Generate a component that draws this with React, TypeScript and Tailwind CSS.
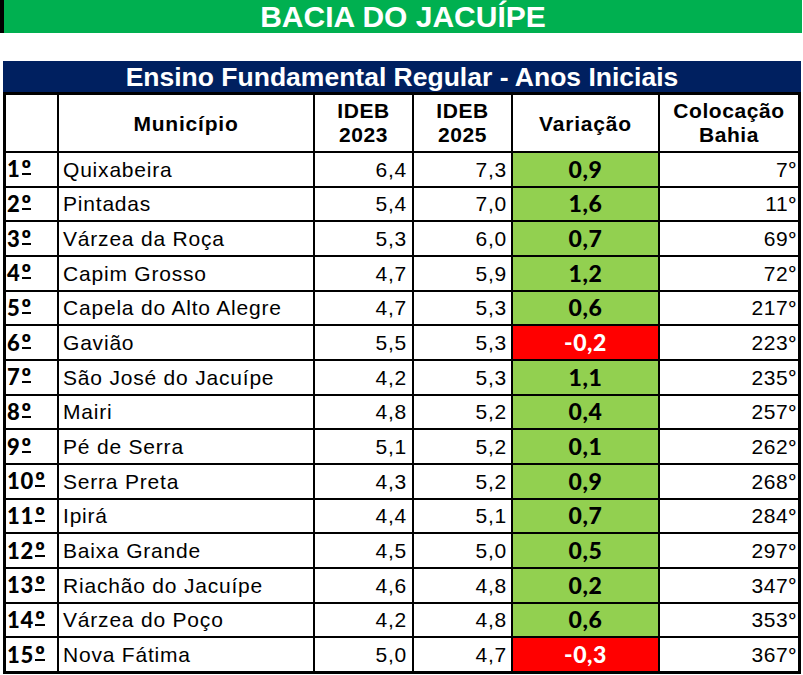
const rows: [string, string, string, string, string, string][] = [
  ["1", "Quixabeira", "6,4", "7,3", "0,9", "7"],
  ["2", "Pintadas", "5,4", "7,0", "1,6", "11"],
  ["3", "Várzea da Roça", "5,3", "6,0", "0,7", "69"],
  ["4", "Capim Grosso", "4,7", "5,9", "1,2", "72"],
  ["5", "Capela do Alto Alegre", "4,7", "5,3", "0,6", "217"],
  ["6", "Gavião", "5,5", "5,3", "-0,2", "223"],
  ["7", "São José do Jacuípe", "4,2", "5,3", "1,1", "235"],
  ["8", "Mairi", "4,8", "5,2", "0,4", "257"],
  ["9", "Pé de Serra", "5,1", "5,2", "0,1", "262"],
  ["10", "Serra Preta", "4,3", "5,2", "0,9", "268"],
  ["11", "Ipirá", "4,4", "5,1", "0,7", "284"],
  ["12", "Baixa Grande", "4,5", "5,0", "0,5", "297"],
  ["13", "Riachão do Jacuípe", "4,6", "4,8", "0,2", "347"],
  ["14", "Várzea do Poço", "4,2", "4,8", "0,6", "353"],
  ["15", "Nova Fátima", "5,0", "4,7", "-0,3", "367"],
];

export default function App() {
  return (
    <div className="w-[803px] h-[675px] bg-white font-['Liberation_Sans',Arial,sans-serif] text-black">
      {/* Banner */}
      <div className="flex h-[33px] border-l-4 border-black">
        <div className="flex-1 mr-px bg-[#00b050] flex items-center justify-center text-white font-bold text-[30px] leading-none pt-px">
          BACIA DO JACUÍPE
        </div>
      </div>

      {/* Section title */}
      <div className="mt-[28px] ml-[3px] mr-[2px] h-[31px] bg-[#002060] flex items-center justify-center text-white font-bold text-[26.5px] leading-none pt-[2px]">
        Ensino Fundamental Regular - Anos Iniciais
      </div>

      {/* Table */}
      <div className="ml-[3px] mr-[2px] h-[582px] border-[3px] border-black bg-black grid gap-[2px] grid-cols-[51px_254px_97px_97px_145px_138px] grid-rows-[56px_repeat(15,minmax(0,1fr))] leading-none">
        <div className="bg-white" />
        <div className="bg-white flex items-center justify-center font-bold text-[21px] tracking-[0.8px]">
          Município
        </div>
        <div className="bg-white flex items-center justify-center text-center font-bold text-[21px] leading-[24px] tracking-[0.6px]">
          IDEB
          <br />
          2023
        </div>
        <div className="bg-white flex items-center justify-center text-center font-bold text-[21px] leading-[24px] tracking-[0.6px]">
          IDEB
          <br />
          2025
        </div>
        <div className="bg-white flex items-center justify-center font-bold text-[21px] tracking-[0.8px]">
          Variação
        </div>
        <div className="bg-white flex items-center justify-center text-center font-bold text-[21px] leading-[24px] tracking-[0.6px]">
          Colocação
          <br />
          Bahia
        </div>

        {rows.map(([pos, city, a, b, diff, rank]) => {
          const neg = diff.startsWith("-");
          return [
            <div key={pos + "p"} className="bg-white flex items-center pl-px font-['Lato',sans-serif] font-black text-[22px] tracking-[0.8px]">
              <span>{pos}</span>
              <span className="relative text-[24px] leading-[22px] ml-px">
                º
                <span className="absolute left-0 right-[1px] top-[15px] h-[2px] bg-black" />
              </span>
            </div>,
            <div key={pos + "c"} className="bg-white flex items-center pl-[4px] text-[21px] tracking-[0.8px]">
              {city}
            </div>,
            <div key={pos + "a"} className="bg-white flex items-center justify-end pr-[5px] text-[21px] tracking-[0.8px]">
              {a}
            </div>,
            <div key={pos + "b"} className="bg-white flex items-center justify-end pr-[4px] text-[21px] tracking-[0.8px]">
              {b}
            </div>,
            <div
              key={pos + "d"}
              className={
                neg
                  ? "bg-[#ff0000] text-white flex items-center justify-center font-['Lato',sans-serif] font-black text-[23px] tracking-[0.6px]"
                  : "bg-[#92d050] flex items-center justify-center font-['Lato',sans-serif] font-black text-[23px] tracking-[0.6px]"
              }
            >
              {diff}
            </div>,
            <div key={pos + "r"} className="bg-white flex items-center justify-end pr-px text-[21px] tracking-[0.6px]">
              {rank}
              <span className="font-['Lato',sans-serif] text-[20px]">º</span>
            </div>,
          ];
        })}
      </div>
    </div>
  );
}
